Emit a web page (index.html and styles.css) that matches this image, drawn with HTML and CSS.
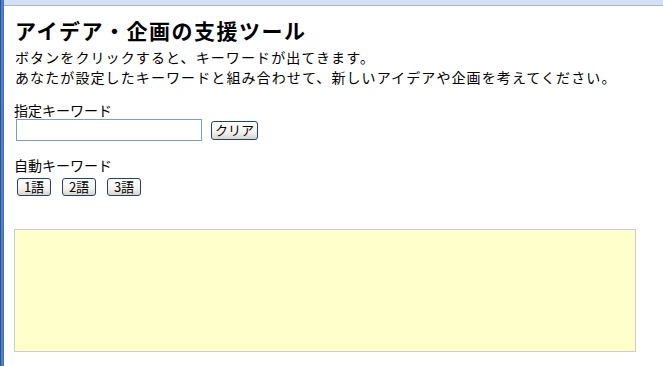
FILE: index.html
```html
<!DOCTYPE html>
<html lang="ja">
<head>
    <meta charset="UTF-8">
    <title>アイデア・企画の支援ツール</title>
    <link rel="stylesheet" href="styles.css">
</head>
<body>
    <div id="shell">
        <div id="edge"></div>
        <div id="main">
            <div id="topbar"></div>
            <div id="content">
                <h1>アイデア・企画の支援ツール</h1>
                <p class="lead">ボタンをクリックすると、キーワードが出てきます。</p>
                <p class="lead">あなたが設定したキーワードと組み合わせて、新しいアイデアや企画を考えてください。</p>

                <div class="label first">指定キーワード</div>
                <div class="row">
                    <input type="text" id="keyword-input">
                    <button class="btn clear">クリア</button>
                </div>

                <div class="label auto">自動キーワード</div>
                <div class="row buttons">
                    <button class="btn">1語</button>
                    <button class="btn">2語</button>
                    <button class="btn">3語</button>
                </div>

                <div id="result"></div>
            </div>
        </div>
    </div>
</body>
</html>
```

FILE: styles.css
```css
html, body {
    margin: 0;
    height: 100%;
    background-color: #ffffff;
}
body {
    font-family: "Noto Sans CJK JP", "DejaVu Sans", sans-serif;
    color: #000000;
}
#shell {
    display: flex;
    min-height: 100%;
}
#edge {
    width: 4px;
    background: linear-gradient(to right, #1d3f7c, #5d8ad4 45%, #3d6cba);
}
#main {
    flex: 1;
}
#topbar {
    height: 5px;
    background-color: #d5e2f6;
    border-bottom: 1px solid #a6b7d2;
}
#content {
    padding-left: 10px;
}
h1 {
    margin: 10px 0 0 1px;
    font-size: 21px;
    line-height: 28px;
    font-weight: bold;
    letter-spacing: 1.5px;
}
.lead {
    margin: 0 0 0 1px;
    font-size: 14px;
    line-height: 20px;
    letter-spacing: 1.1px;
}
h1 + .lead {
    margin-top: 3px;
}
.label {
    font-size: 14px;
    line-height: 18px;
}
.label.first {
    margin-top: 14px;
}
.label.auto {
    margin-top: 15px;
}
.row {
    display: flex;
    align-items: center;
    margin-top: 0;
    margin-left: 2px;
}
#keyword-input {
    box-sizing: border-box;
    width: 186px;
    height: 22px;
    margin: 0;
    padding: 1px 3px;
    border: 1px solid #7f9db9;
    font-size: 13px;
}
.btn {
    box-sizing: border-box;
    height: 18px;
    margin: 0;
    padding: 0 3px;
    font-family: "Noto Sans CJK JP", sans-serif;
    font-size: 13px;
    line-height: 14px;
    color: #000000;
    border: 1px solid #1f4378;
    border-radius: 3px;
    background: linear-gradient(to bottom, #ffffff, #f3f2ec 60%, #d9d6c8);
    cursor: pointer;
}
.btn.clear {
    width: 47px;
    height: 19px;
    margin-left: 9px;
}
.buttons {
    margin-top: 4px;
    margin-left: 3px;
    gap: 11px;
}
.buttons .btn {
    width: 34px;
}
#result {
    box-sizing: border-box;
    width: 622px;
    height: 123px;
    margin-top: 33px;
    background-color: #ffffcc;
    border: 1px solid #cccccc;
}
```
